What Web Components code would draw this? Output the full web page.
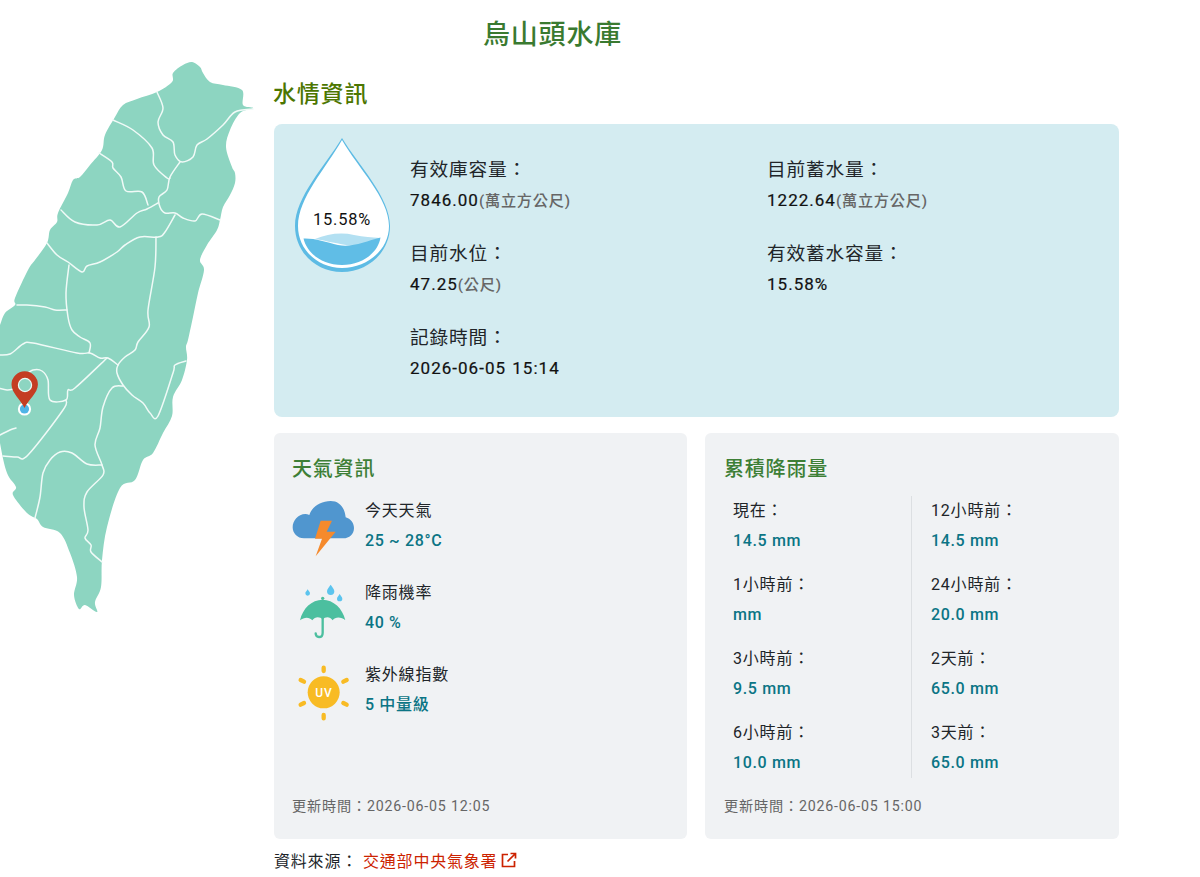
<!DOCTYPE html>
<html lang="zh-Hant">
<head>
<meta charset="utf-8">
<title>烏山頭水庫</title>
<style>
html, body { margin: 0; background: #fff; }
body { font-family: Roboto, "Noto Sans CJK TC", sans-serif; letter-spacing: .05em; color: #212529; }
reservoir-page { display: block; }
</style>
</head>
<body>
<reservoir-page name="烏山頭水庫">
    <taiwan-map slot="map"></taiwan-map>

    <water-panel slot="water" percent="15.58%">
        <stat-item label="有效庫容量：" value="7846.00" unit="(萬立方公尺)"></stat-item>
        <stat-item label="目前蓄水量：" value="1222.64" unit="(萬立方公尺)"></stat-item>
        <stat-item label="目前水位：" value="47.25" unit="(公尺)"></stat-item>
        <stat-item label="有效蓄水容量：" value="15.58%"></stat-item>
        <stat-item label="記錄時間：" value="2026-06-05 15:14"></stat-item>
    </water-panel>

    <info-card slot="cards" heading="天氣資訊" updated="更新時間：2026-06-05 12:05">
        <weather-row kind="storm" label="今天天氣" value="25 ~ 28°C"></weather-row>
        <weather-row kind="rain" label="降雨機率" value="40 %"></weather-row>
        <weather-row kind="uv" label="紫外線指數" value="5 中量級"></weather-row>
    </info-card>

    <info-card slot="cards" wide heading="累積降雨量" updated="更新時間：2026-06-05 15:00">
        <rain-grid>
            <rain-item label="現在：" value="14.5 mm"></rain-item>
            <rain-item label="12小時前：" value="14.5 mm"></rain-item>
            <rain-item label="1小時前：" value="mm"></rain-item>
            <rain-item label="24小時前：" value="20.0 mm"></rain-item>
            <rain-item label="3小時前：" value="9.5 mm"></rain-item>
            <rain-item label="2天前：" value="65.0 mm"></rain-item>
            <rain-item label="6小時前：" value="10.0 mm"></rain-item>
            <rain-item label="3天前：" value="65.0 mm"></rain-item>
        </rain-grid>
    </info-card>

    <source-line slot="source" label="資料來源：" name="交通部中央氣象署"></source-line>
</reservoir-page>

<script>
// smooth path through traced points
const curve = (pts, closed) => {
    const n = pts.length;
    const at = (i) => closed ? pts[(i + n) % n] : pts[Math.max(0, Math.min(n - 1, i))];
    let d = `M${pts[0][0]} ${pts[0][1]}`;
    const last = closed ? n : n - 1;
    for (let i = 0; i < last; i++) {
        const [p0, p1, p2, p3] = [at(i - 1), at(i), at(i + 1), at(i + 2)];
        const c1 = [p1[0] + (p2[0] - p0[0]) / 6, p1[1] + (p2[1] - p0[1]) / 6];
        const c2 = [p2[0] - (p3[0] - p1[0]) / 6, p2[1] - (p3[1] - p1[1]) / 6];
        d += `C${c1[0].toFixed(1)} ${c1[1].toFixed(1)} ${c2[0].toFixed(1)} ${c2[1].toFixed(1)} ${p2[0]} ${p2[1]}`;
    }
    return d + (closed ? 'Z' : '');
};

const OUTLINE = [[192,62],[200,67],[203,73],[210,82],[223,85],[242,90],[243,105],[253,108],[240,113],[230,130],[226,147],[232,167],[235,173],[235,183],[230,195],[223,207],[220,220],[217,230],[207,245],[200,260],[204,270],[198,293],[193,317],[188,340],[186,347],[187,360],[182,380],[173,397],[172,416],[163,433],[153,453],[143,460],[135,480],[120,488],[107,527],[102,560],[101,587],[95,602],[97,612],[85,605],[79,609],[74,595],[77,577],[70,553],[60,533],[43,527],[37,519],[27,513],[13,495],[16,487],[7,473],[0,443],[-6,400],[-6,340],[0,325],[5,313],[15,305],[15,298],[28,270],[35,260],[47,243],[50,230],[57,222],[58,213],[68,193],[73,180],[80,177],[90,165],[102,150],[105,135],[115,117],[123,105],[137,99],[157,92],[172,82],[173,73],[183,65]];

const BORDERS = [
    [[157,92],[163,108],[158,122],[163,135],[173,142],[175,155],[182,162],[193,157],[197,145],[207,139],[223,125],[235,112],[253,109]],
    [[113,120],[133,130],[152,148],[154,165],[167,178],[170,178]],
    [[180,162],[170,177],[167,190],[159,197],[160,207],[165,213],[175,213],[183,218],[195,221],[202,214],[220,220]],
    [[99,153],[112,162],[113,168],[121,177],[126,191],[142,192],[148,205]],
    [[61,210],[75,222],[97,225],[110,220],[120,227],[137,213],[147,209],[158,203]],
    [[175,215],[165,232],[158,237],[140,237],[125,245],[117,252],[100,262],[87,266],[82,272],[68,262],[57,255],[47,243]],
    [[156,237],[155,267],[148,310],[149,327],[138,342],[135,350],[125,357],[118,365],[117,373],[123,385],[132,395],[143,403],[150,413],[158,416],[173,373],[175,365],[186,361]],
    [[69,265],[66,293],[68,317],[72,330],[80,337],[90,343],[89,353]],
    [[17,305],[27,305],[45,307],[55,310],[67,310]],
    [[-2,355],[10,354],[23,344],[33,343],[77,353],[90,353],[100,358],[108,358],[118,365]],
    [[107,358],[75,388],[68,390],[66,400],[50,400],[48,380],[42,371],[33,370],[24,376]],
    [[-2,388],[7,390],[14,389]],
    [[66,400],[63,410],[28,455],[17,457],[3,456]],
    [[-2,436],[10,430],[16,428]],
    [[123,386],[112,388],[103,407],[100,428],[95,445],[102,465],[103,475],[87,492],[84,507],[88,530],[85,538],[91,545],[91,552],[102,562]],
    [[102,465],[87,464],[72,453],[60,452],[50,460],[43,473],[40,497],[35,518]]
];

class TaiwanMap extends HTMLElement {
    connectedCallback() {
        this.attachShadow({ mode: 'open' });
        const lines = BORDERS.map((b) => `<path d="${curve(b, false)}"/>`).join('');
        this.shadowRoot.innerHTML = `
            <style>
                :host { display: block; width: 274px; height: 560px; }
                svg { display: block; }
            </style>
            <svg width="274" height="560" viewBox="0 60 274 560">
                <path d="${curve(OUTLINE, true)}" fill="#8dd5c1"/>
                <g fill="none" stroke="#f0faf7" stroke-width="1.5" stroke-linecap="round" stroke-linejoin="round">${lines}</g>
                <circle cx="24.5" cy="409" r="6.6" fill="#fff"/>
                <circle cx="24.5" cy="409" r="4.6" fill="#4fb4e6"/>
                <path d="M24.5 408C21 400 11.500 393 11.500 384.500A13.200 13.200 0 0 1 37.900 384.500C37.900 393 28 400 24.500 408Z" fill="#c43d22"/>
                <circle cx="25" cy="385" r="6.600" fill="#8dd5c1" stroke="#eef9f6" stroke-width="1.200"/>
            </svg>
        `;
    }
}

class WaterDrop extends HTMLElement {
    connectedCallback() {
        this.attachShadow({ mode: 'open' });
        this.shadowRoot.innerHTML = `
            <style>
                :host { display: block; position: relative; width: 96px; height: 136px; flex: none; }
                svg { display: block; }
                span { position: absolute; left: 0; right: 0; top: 71px; text-align: center; font-size: 16.4px; line-height: 24px; color: #111; }
            </style>
            <svg width="96" height="136" viewBox="0 0 96 136">
                <path d="M48 1C31 29 1 60 1 89C1 115 22 135 48 135C74 135 96 115 96 89C96 60 65 29 48 1Z" fill="#5dbbe4"/>
                <path d="M48 3C32 31 4 61 4 89C4 113 24 131 48 131C73 131 95 113 95 89C95 61 64 31 48 3Z" fill="#fff"/>
                <path d="M21 102C33 97 47 95 60 98C70 100 78 100 86 101C80 106 66 110 52 108C40 106 28 103 21 102Z" fill="#b3e0f2"/>
                <path d="M9.500 101.500C20 101 32 105 44 108C58 111 72 104 86.500 100.500C84 116 68 128 48 128C28 128 13 116 9.500 101.500Z" fill="#60bde6"/>
            </svg>
            <span>${this.getAttribute('percent')}</span>
        `;
    }
}

class StatItem extends HTMLElement {
    connectedCallback() {
        this.attachShadow({ mode: 'open' });
        const unit = this.getAttribute('unit');
        this.shadowRoot.innerHTML = `
            <style>
                :host { display: block; }
                .label { font-size: 18.72px; line-height: 30px; color: #212529; }
                .value { height: 32px; margin-top: -1px; font-size: 17px; line-height: 32px; letter-spacing: .06em; word-spacing: 1px; color: #111; -webkit-text-stroke: .2px #111; }
                .unit { font-size: 15.2px; line-height: 0; font-weight: 500; letter-spacing: .05em; color: #666; -webkit-text-stroke: 0; }
            </style>
            <div class="label">${this.getAttribute('label')}</div>
            <div class="value">${this.getAttribute('value')}${unit ? `<span class="unit">${unit}</span>` : ''}</div>
        `;
    }
}

class WaterPanel extends HTMLElement {
    connectedCallback() {
        this.attachShadow({ mode: 'open' });
        this.shadowRoot.innerHTML = `
            <style>
                :host { display: flex; gap: 20px; box-sizing: border-box; height: 293px; padding: 13px 20px 0; background: #d4ecf1; border-radius: 8px; }
                .stats { display: grid; grid-template-columns: 357px 1fr; row-gap: 23px; align-content: start; padding-top: 18px; flex: 1; }
            </style>
            <water-drop percent="${this.getAttribute('percent')}"></water-drop>
            <div class="stats"><slot></slot></div>
        `;
    }
}

class InfoCard extends HTMLElement {
    connectedCallback() {
        this.attachShadow({ mode: 'open' });
        this.shadowRoot.innerHTML = `
            <style>
                :host { display: flex; flex-direction: column; box-sizing: border-box; height: 406px; padding: 21px 18px 22px 18px; background: #f0f2f4; border-radius: 6px; }
                :host([wide]) { padding-left: 19px; }
                h3 { margin: 0 0 13px; font-size: 20px; line-height: 30px; font-weight: 500; color: #3d7f36; }
                .updated { margin-top: auto; font-size: 14.2px; line-height: 22px; color: #666; }
            </style>
            <h3>${this.getAttribute('heading')}</h3>
            <slot></slot>
            <div class="updated">${this.getAttribute('updated')}</div>
        `;
    }
}

const WEATHER_ICONS = {
    storm: `<svg width="68" height="60" viewBox="30 21 204 180">
        <path d="M72 145C52 145 38 130 38 112C38 92 54 72 76 72C80 72 84 73 88 75C96 50 122 33 152 33C178 33 194 52 197 82C212 86 222 100 222 114C222 132 208 145 190 145Z" fill="#5096cf"/>
        <path d="M122 92H156L140 125H167L107 199L126 146H105Z" fill="#f58a2c"/>
    </svg>`,
    rain: `<svg width="68" height="60" viewBox="30 267 204 180">
        <path d="M152 284C157 292 163 297 163 304A11 11 0 0 1 141 304C141 297 147 292 152 284Z" fill="#5cc4ee"/>
        <path d="M83 298C86 303 90 306 90 310A7 7 0 0 1 76 310C76 306 80 303 83 298Z" fill="#5cc4ee"/>
        <path d="M179 312C182 318 187 321 187 326A8 8 0 0 1 171 326C171 321 176 318 179 312Z" fill="#5cc4ee"/>
        <circle cx="128" cy="325" r="5" fill="#4cbf9f"/>
        <path d="M60 391C68 355 95 329 128 329C160 329 188 355 196 391C185 381 166 379 158 391C150 379 136 379 128 389C120 379 105 379 97 391C88 380 72 381 60 391Z" fill="#4cbf9f"/>
        <path d="M128 385V428Q128 441 117 441Q107 441 107 430" fill="none" stroke="#4cbf9f" stroke-width="7" stroke-linecap="round"/>
    </svg>`,
    uv: `<svg width="68" height="60" viewBox="30 513 204 180">
        <g stroke="#f8bb24" stroke-width="13" stroke-linecap="round">
            <path d="M131 533V543M131 675V685M62 570L72 575M190 575L200 570M62 644L72 639M190 639L200 644"/>
        </g>
        <circle cx="131" cy="607" r="48" fill="#f8bb24"/>
        <text x="132" y="620" text-anchor="middle" font-family="Roboto, sans-serif" font-size="36" font-weight="500" letter-spacing="3" fill="#fff">UV</text>
    </svg>`
};

class WeatherRow extends HTMLElement {
    connectedCallback() {
        this.attachShadow({ mode: 'open' });
        this.shadowRoot.innerHTML = `
            <style>
                :host { display: flex; gap: 7px; margin: 0 0 22px -1px; }
                .icon { flex: none; width: 68px; height: 60px; margin-left: -1px; }
                svg { display: block; }
                .label { font-size: 16px; line-height: 28px; color: #212529; }
                .value { font-size: 16px; line-height: 32px; font-weight: 500; letter-spacing: .04em; color: #0b7585; }
            </style>
            <div class="icon">${WEATHER_ICONS[this.getAttribute('kind')]}</div>
            <div>
                <div class="label">${this.getAttribute('label')}</div>
                <div class="value">${this.getAttribute('value')}</div>
            </div>
        `;
    }
}

class RainGrid extends HTMLElement {
    connectedCallback() {
        this.attachShadow({ mode: 'open' });
        this.shadowRoot.innerHTML = `
            <style>
                :host { display: block; position: relative; margin-top: -1px; }
                .grid { display: grid; grid-template-columns: 207px 1fr; row-gap: 14px; }
                .rule { position: absolute; left: 187px; top: 0; bottom: 0; width: 1px; background: #dcdfe2; }
                ::slotted(*) { padding-left: 9px; }
                ::slotted(:nth-child(even)) { padding-left: 0; }
            </style>
            <div class="rule"></div>
            <div class="grid"><slot></slot></div>
        `;
    }
}

class RainItem extends HTMLElement {
    connectedCallback() {
        this.attachShadow({ mode: 'open' });
        this.shadowRoot.innerHTML = `
            <style>
                :host { display: block; }
                .label { font-size: 16px; line-height: 30px; color: #212529; }
                .value { font-size: 16px; line-height: 30px; font-weight: 500; letter-spacing: .04em; color: #0b7585; }
            </style>
            <div class="label">${this.getAttribute('label')}</div>
            <div class="value">${this.getAttribute('value')}</div>
        `;
    }
}

class SourceLine extends HTMLElement {
    connectedCallback() {
        this.attachShadow({ mode: 'open' });
        this.shadowRoot.innerHTML = `
            <style>
                :host { display: flex; align-items: center; height: 28px; margin-top: 7px; font-size: 16px; color: #212529; }
                a { display: inline-flex; align-items: center; gap: 4px; margin-left: 5px; color: #cc2200; text-decoration: none; }
                svg { display: block; }
            </style>
            <span>${this.getAttribute('label')}</span>
            <a href="#"><span>${this.getAttribute('name')}</span>
                <svg width="16" height="16" viewBox="0 0 16 16" fill="none" stroke="#cc2200" stroke-width="1.700">
                    <path d="M7 2.500H1.500V14.500H13.500V9"/>
                    <path d="M6.500 9.500L14 2M9.500 1.500H14.500V6.500"/>
                </svg>
            </a>
        `;
    }
}

class ReservoirPage extends HTMLElement {
    connectedCallback() {
        this.attachShadow({ mode: 'open' });
        this.shadowRoot.innerHTML = `
            <style>
                :host { display: block; }
                h1 { margin: 0; height: 68px; padding-left: 483px; font-size: 27px; line-height: 70px; font-weight: 500; color: #3a7a30; }
                .body { display: grid; grid-template-columns: 274px 845px; }
                .map { height: 0; margin-top: -8px; }
                h2 { margin: 0 0 3px -1px; padding-top: 1px; font-size: 23px; line-height: 52px; font-weight: 500; color: #4c7600; }
                .cards { display: grid; grid-template-columns: 413px 414px; gap: 18px; margin-top: 16px; }
            </style>
            <h1>${this.getAttribute('name')}</h1>
            <div class="body">
                <div class="map"><slot name="map"></slot></div>
                <main>
                    <h2>水情資訊</h2>
                    <slot name="water"></slot>
                    <div class="cards"><slot name="cards"></slot></div>
                    <slot name="source"></slot>
                </main>
            </div>
        `;
    }
}

customElements.define('taiwan-map', TaiwanMap);
customElements.define('water-drop', WaterDrop);
customElements.define('stat-item', StatItem);
customElements.define('water-panel', WaterPanel);
customElements.define('info-card', InfoCard);
customElements.define('weather-row', WeatherRow);
customElements.define('rain-grid', RainGrid);
customElements.define('rain-item', RainItem);
customElements.define('source-line', SourceLine);
customElements.define('reservoir-page', ReservoirPage);
</script>
</body>
</html>
